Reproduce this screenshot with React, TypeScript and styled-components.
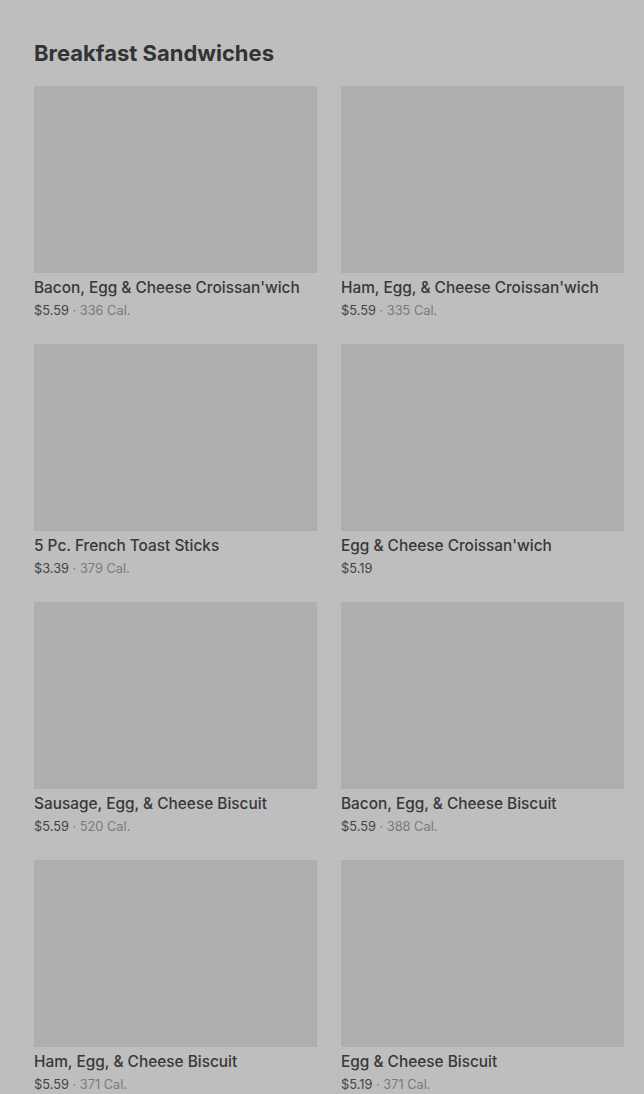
import React from "react";
import styled, { createGlobalStyle } from "styled-components";

const GlobalStyle = createGlobalStyle`
  body {
    margin: 0;
    background: #bebebe;
    font-family: Inter, "Noto Sans", sans-serif;
  }
`

const Page = styled.div`
  padding: 38px 20px 0 34px;
  height: 1094px;
  overflow: hidden;
  box-sizing: border-box;
`
const Heading = styled.h2`
  margin: 0 0 18px;
  font-size: 22px;
  line-height: 30px;
  font-weight: 700;
  letter-spacing: 0;
  color: #333;
`
const Grid = styled.div`
  display: grid;
  grid-template-columns: 283px 283px;
  column-gap: 24px;
  row-gap: 24px;
`
const Card = styled.div`
  display: flex;
  flex-direction: column;
`
const Thumb = styled.div`
  height: 187px;
  background: #aeaeae;
`
const Name = styled.div`
  margin-top: 5px;
  font-size: 15.4px;
  line-height: 20px;
  font-weight: 500;
  color: #383838;
  white-space: nowrap;
`
const Meta = styled.div`
  margin-top: 4px;
  font-size: 12.8px;
  line-height: 18px;
  color: #444;
`
const Cal = styled.span`
  color: #7a7a7a;
`

type Item = { name: string; price: string; cal?: string }

const items: Item[] = [
  { name: "Bacon, Egg & Cheese Croissan'wich", price: "$5.59", cal: "336 Cal." },
  { name: "Ham, Egg, & Cheese Croissan'wich", price: "$5.59", cal: "335 Cal." },
  { name: "5 Pc. French Toast Sticks", price: "$3.39", cal: "379 Cal." },
  { name: "Egg & Cheese Croissan'wich", price: "$5.19" },
  { name: "Sausage, Egg, & Cheese Biscuit", price: "$5.59", cal: "520 Cal." },
  { name: "Bacon, Egg, & Cheese Biscuit", price: "$5.59", cal: "388 Cal." },
  { name: "Ham, Egg, & Cheese Biscuit", price: "$5.59", cal: "371 Cal." },
  { name: "Egg & Cheese Biscuit", price: "$5.19", cal: "371 Cal." },
]

export default function App() {
  return (
    <>
      <GlobalStyle />
      <Page>
        <Heading>Breakfast Sandwiches</Heading>
        <Grid>
          {items.map(item => (
            <Card key={item.name}>
              <Thumb />
              <Name>{item.name}</Name>
              <Meta>
                {item.price}
                {item.cal && <Cal> · {item.cal}</Cal>}
              </Meta>
            </Card>
          ))}
        </Grid>
      </Page>
    </>
  )
}
